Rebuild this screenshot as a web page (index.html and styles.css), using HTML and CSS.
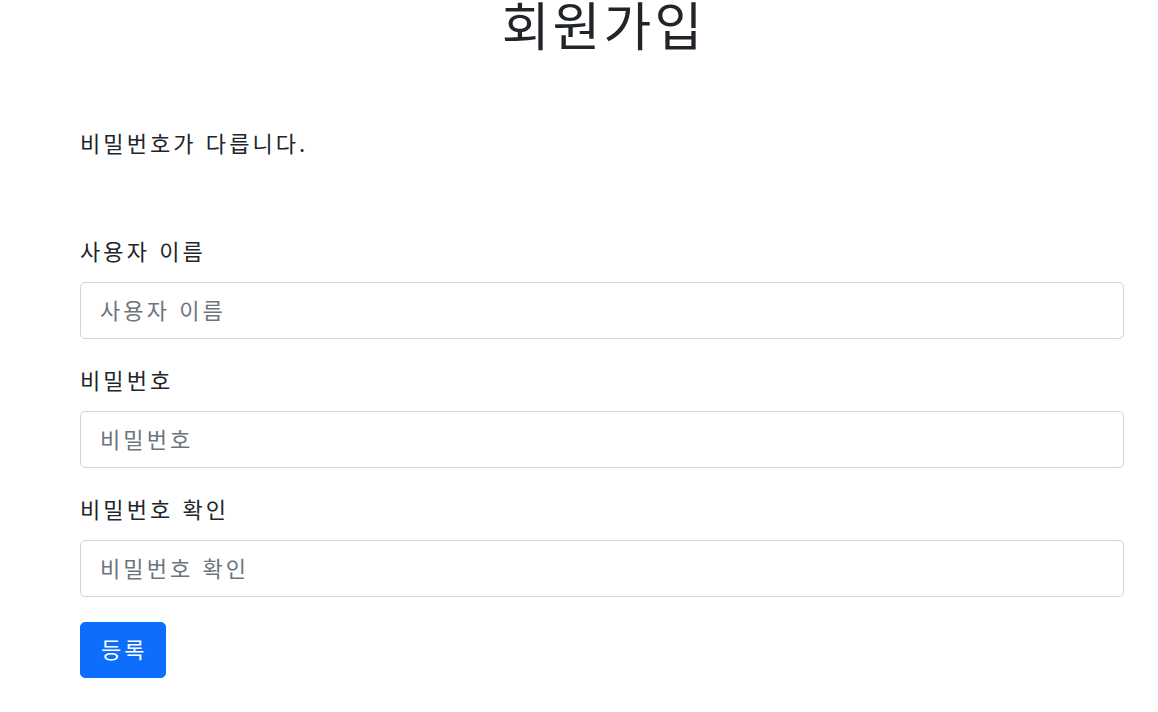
FILE: index.html
```
<!DOCTYPE html>
<html lang="ko">
<head>
    <meta charset="UTF-8">
    <meta name="viewport" content="width=device-width, initial-scale=1.0">
    <title>회원가입</title>
    <link rel="stylesheet" href="styles.css">
</head>
<body>
    <div class="container">
        <h1 class="title">회원가입</h1>

        <!-- 오류 메시지 -->
        <p class="error">비밀번호가 다릅니다.</p>

        <form class="signup-form" onsubmit="return false;">
            <div class="field">
                <label for="username">사용자 이름</label>
                <input type="text" id="username" placeholder="사용자 이름">
            </div>
            <div class="field">
                <label for="password">비밀번호</label>
                <input type="password" id="password" placeholder="비밀번호">
            </div>
            <div class="field">
                <label for="password-confirm">비밀번호 확인</label>
                <input type="password" id="password-confirm" placeholder="비밀번호 확인">
            </div>
            <button type="submit">등록</button>
        </form>
    </div>
</body>
</html>
```

FILE: styles.css
```
body {
    font-family: "Noto Sans CJK KR", "Noto Sans", sans-serif;
    font-size: 22px;
    line-height: 30px;
    letter-spacing: 0.14em;
    color: #212529;
    background-color: #fff;
    margin: 0;
    padding: 0;
}

.container {
    padding: 0 34px 0 80px;
}

.title {
    margin: 0;
    padding-left: 0.06em;
    font-size: 52px;
    font-weight: 400;
    line-height: 48px;
    letter-spacing: 0.06em;
    text-align: center;
}

.error {
    margin: 79px 0 78px;
}

.signup-form {
    display: flex;
    flex-direction: column;
    gap: 25px;
}

.field {
    display: flex;
    flex-direction: column;
    gap: 17px;
}

label {
    display: block;
}

input {
    box-sizing: border-box;
    width: 100%;
    height: 57px;
    padding: 0 19px 4px;
    font-family: inherit;
    font-size: 22px;
    letter-spacing: 0.14em;
    color: #212529;
    border: 1px solid #ced4da;
    border-radius: 5px;
    outline: none;
}

input::placeholder {
    color: #6c757d;
}

button {
    align-self: flex-start;
    height: 56px;
    padding: 0 17px 4px 20px;
    font-family: inherit;
    font-size: 22px;
    letter-spacing: 0.14em;
    color: #fff;
    background-color: #0d6efd;
    border: 1px solid #0d6efd;
    border-radius: 5px;
    cursor: pointer;
}
```
